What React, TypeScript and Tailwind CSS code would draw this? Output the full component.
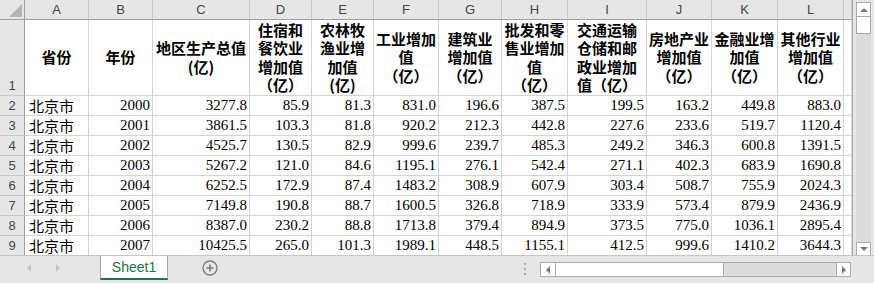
import React from "react";

const letters = ["A", "B", "C", "D", "E", "F", "G", "H", "I", "J", "K", "L", ""];

const heads: string[][] = [
  ["省份"],
  ["年份"],
  ["地区生产总值", "(亿)"],
  ["住宿和", "餐饮业", "增加值", "（亿）"],
  ["农林牧", "渔业增", "加值", "(亿)"],
  ["工业增加", "值", "（亿）"],
  ["建筑业", "增加值", "（亿）"],
  ["批发和零", "售业增加", "值", "（亿）"],
  ["交通运输", "仓储和邮", "政业增加", "值（亿）"],
  ["房地产业", "增加值", "（亿）"],
  ["金融业增", "加值", "（亿）"],
  ["其他行业", "增加值", "（亿）"],
];

const rows = [
  ["2000", "3277.8", "85.9", "81.3", "831.0", "196.6", "387.5", "199.5", "163.2", "449.8", "883.0"],
  ["2001", "3861.5", "103.3", "81.8", "920.2", "212.3", "442.8", "227.6", "233.6", "519.7", "1120.4"],
  ["2002", "4525.7", "130.5", "82.9", "999.6", "239.7", "485.3", "249.2", "346.3", "600.8", "1391.5"],
  ["2003", "5267.2", "121.0", "84.6", "1195.1", "276.1", "542.4", "271.1", "402.3", "683.9", "1690.8"],
  ["2004", "6252.5", "172.9", "87.4", "1483.2", "308.9", "607.9", "303.4", "508.7", "755.9", "2024.3"],
  ["2005", "7149.8", "190.8", "88.7", "1600.5", "326.8", "718.9", "333.9", "573.4", "879.9", "2436.9"],
  ["2006", "8387.0", "230.2", "88.8", "1713.8", "379.4", "894.9", "373.5", "775.0", "1036.1", "2895.4"],
  ["2007", "10425.5", "265.0", "101.3", "1989.1", "448.5", "1155.1", "412.5", "999.6", "1410.2", "3644.3"],
];

const cell = "border-r border-b border-[#d4d4d4] overflow-hidden";
const rowHead =
  "bg-[#e6e6e6] border-r border-r-[#9f9f9f] border-b border-b-[#c8c8c8] flex items-end justify-center text-[13px] leading-[19px] text-[#444] font-['Liberation_Sans',sans-serif]";

const Arrow = ({ dir, color = "#7b7b7b" }: { dir: "up" | "down" | "left" | "right"; color?: string }) => {
  const pts = {
    up: "0,4 4,0 8,4",
    down: "0,0 8,0 4,4",
    left: "4,0 4,8 0,4",
    right: "0,0 0,8 4,4",
  }[dir];
  const vertical = dir === "up" || dir === "down";
  return (
    <svg width={vertical ? 8 : 4} height={vertical ? 4 : 8} viewBox={vertical ? "0 0 8 4" : "0 0 4 8"}>
      <polygon points={pts} fill={color} />
    </svg>
  );
};

export default function App() {
  return (
    <div className="w-[874px] h-[283px] bg-[#e6e6e6] flex flex-col overflow-hidden">
      <div className="flex h-[255px] shrink-0">
        <div className="w-[853px] h-[255px] overflow-hidden bg-white border-r border-[#ababab]">
          <div className="grid grid-cols-[25px_64px_64px_97px_62px_62px_65px_63px_66px_79px_65px_66px_66px_8px] grid-rows-[20px_76px_repeat(8,20px)]">
            {/* corner */}
            <div className="bg-[#e6e6e6] border-r border-b border-[#9f9f9f] flex items-end justify-end pr-[2px] pb-[2px]">
              <svg width="13" height="13" viewBox="0 0 13 13">
                <polygon points="13,0 13,13 0,13" fill="#b4b4b4" />
              </svg>
            </div>
            {letters.map((l, i) => (
              <div
                key={"h" + i}
                className="bg-[#e6e6e6] border-r border-r-[#c8c8c8] border-b border-b-[#9f9f9f] flex items-center justify-center text-[13px] leading-[19px] text-[#444] font-['Liberation_Sans',sans-serif]"
              >
                {l}
              </div>
            ))}

            {/* row 1 */}
            <div className={rowHead}>1</div>
            {heads.map((lines, i) => (
              <div
                key={"t" + i}
                className={`${cell} flex flex-col items-center justify-center text-center text-[15px] leading-[18.5px] font-semibold text-black font-['Noto_Sans_CJK_SC',sans-serif]`}
              >
                {lines.map((t, j) => (
                  <span key={j} className="whitespace-nowrap">
                    {t}
                  </span>
                ))}
              </div>
            ))}
            <div className={cell} />

            {rows.map((r, ri) => (
              <React.Fragment key={"r" + ri}>
                <div className={rowHead}>{ri + 2}</div>
                <div className={`${cell} flex items-center pl-[4px] text-[15px] leading-[19px] text-black font-['Noto_Sans_CJK_SC',sans-serif]`}>
                  北京市
                </div>
                {r.map((v, ci) => (
                  <div
                    key={ci}
                    className={`${cell} flex items-center justify-end pr-[2px] text-[15px] leading-[19px] text-black font-['Liberation_Serif',serif]`}
                  >
                    {v}
                  </div>
                ))}
                <div className={cell} />
              </React.Fragment>
            ))}
          </div>
        </div>

        {/* vertical scrollbar */}
        <div className="flex-1 pl-[3px] pt-[2px]">
          <div className="w-[15px] h-[254px] bg-[#dcdcdc] flex flex-col">
            <div className="h-[15px] bg-white border border-[#ababab] flex items-center justify-center">
              <Arrow dir="up" />
            </div>
            <div className="h-[17px] bg-white border border-t-0 border-[#ababab]" />
            <div className="flex-1" />
            <div className="h-[14px] bg-white border border-[#ababab] flex items-center justify-center">
              <Arrow dir="down" />
            </div>
          </div>
        </div>
      </div>

      {/* sheet tabs bar */}
      <div className="flex-1 flex items-start border-t border-[#c6c6c6]">
        <div className="w-[100px] h-[23px] flex items-center">
          <div className="ml-[27px]">
            <Arrow dir="left" color="#c4c4c4" />
          </div>
          <div className="ml-[25px]">
            <Arrow dir="right" color="#c4c4c4" />
          </div>
        </div>
        <div className="w-[68px] h-[24px] bg-white border-x border-[#ababab] border-b-2 border-b-[#217346] flex items-center justify-center text-[14px] leading-[20px] text-[#217346] font-['Liberation_Sans',sans-serif]">
          Sheet1
        </div>
        <div className="ml-[34px] mt-[4px]">
          <svg width="16" height="16" viewBox="0 0 16 16">
            <circle cx="8" cy="8" r="7" fill="none" stroke="#7a7a7a" strokeWidth="1.3" />
            <path d="M8 4.5v7M4.5 8h7" stroke="#7a7a7a" strokeWidth="1.6" />
          </svg>
        </div>
        <div className="ml-[306px] mt-[7px] flex flex-col gap-[3px]">
          <div className="w-[2px] h-[2px] bg-[#a8a8a8]" />
          <div className="w-[2px] h-[2px] bg-[#a8a8a8]" />
          <div className="w-[2px] h-[2px] bg-[#a8a8a8]" />
        </div>
        <div className="ml-[14px] mt-[6px] w-[311px] h-[15px] bg-[#dcdcdc] border border-[#ababab] flex">
          <div className="w-[15px] bg-white border-r border-[#ababab] flex items-center justify-center">
            <Arrow dir="left" />
          </div>
          <div className="w-[168px] bg-white border-r border-[#ababab]" />
          <div className="flex-1" />
          <div className="w-[14px] bg-white border-l border-[#ababab] flex items-center justify-center">
            <Arrow dir="right" />
          </div>
        </div>
      </div>
    </div>
  );
}
